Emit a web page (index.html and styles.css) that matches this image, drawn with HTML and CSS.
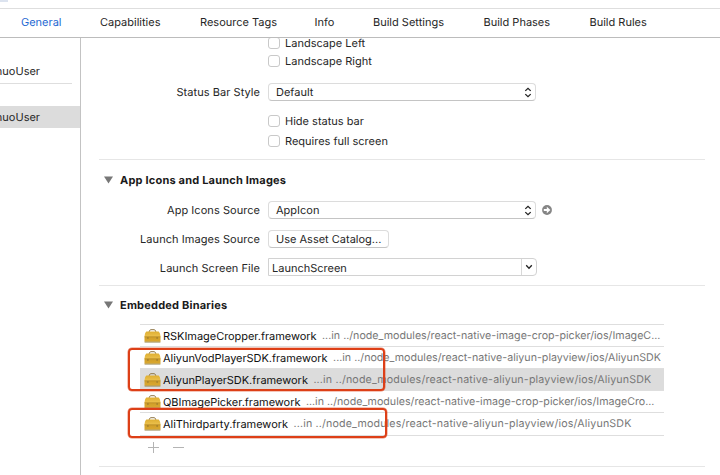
FILE: index.html
```html
<!DOCTYPE html>
<html lang="en">
<head>
<meta charset="utf-8">
<title>Project settings</title>
<link rel="stylesheet" href="styles.css">
</head>
<body>
<svg width="0" height="0" class="defs" aria-hidden="true">
  <defs>
    <linearGradient id="gold" x1="0" y1="0" x2="0" y2="1"><stop offset="0" stop-color="#dfaf32"/><stop offset=".45" stop-color="#ebc04c"/><stop offset=".55" stop-color="#d09e2a"/><stop offset="1" stop-color="#dba92f"/></linearGradient>
    <symbol id="case" viewBox="0 0 17 14">
      <path d="M5.3 3V2.2Q5.6 1 6.8 .7H10.2Q11.4 1 11.7 2.2V3" fill="none" stroke="#8d7444" stroke-width="1"/>
      <path d="M2.3 2.6H14.7Q16.2 3.8 16.5 7.2V12.8H.5V7.2Q.8 3.8 2.3 2.6Z" fill="url(#gold)"/>
      <path d="M.6 7.8H16.4" stroke="#ad8222" stroke-width=".6"/>
      <path d="M.6 13.1H16.4" stroke="#8d7638" stroke-width=".8"/>
      <path d="M3.9 8.2V9.7M13.1 8.2V9.7" stroke="#8a7030" stroke-width="1.1"/>
    </symbol>
    <symbol id="updown" viewBox="0 0 8 11"><path d="M1.3 3.9L4 1.3L6.7 3.9M1.3 7.1L4 9.7L6.7 7.1" fill="none" stroke="#222" stroke-width="1.3"/></symbol>
  </defs>
</svg>
<div class="window">
  <div class="toolbar"><i class="chip"></i></div>
  <nav class="tabs">
    <span class="tab on">General</span><span class="tab t2">Capabilities</span><span class="tab t3">Resource Tags</span><span class="tab t4">Info</span><span class="tab t5">Build Settings</span><span class="tab t6">Build Phases</span><span class="tab t7">Build Rules</span>
  </nav>
  <div class="body">
    <aside class="side">
      <div class="project"><span>nuoUser</span></div>
      <div class="target"><span>nuoUser</span></div>
    </aside>
    <main class="editor">
      <section class="deploy">
        <div class="row r-left"><span></span><label class="check"><i></i><span>Landscape Left</span></label></div>
        <div class="row r-right"><span></span><label class="check"><i></i><span>Landscape Right</span></label></div>
        <div class="row r-style"><span class="name">Status Bar Style</span><div class="select"><span>Default</span><svg width="8" height="11"><use href="#updown"/></svg></div></div>
        <div class="row r-hide"><span></span><label class="check"><i></i><span>Hide status bar</span></label></div>
        <div class="row r-full"><span></span><label class="check"><i></i><span>Requires full screen</span></label></div>
      </section>
      <section class="icons">
        <h2><svg width="9" height="8"><path d="M0 .5H9L4.5 7.5Z" fill="#777"/></svg><span>App Icons and Launch Images</span></h2>
        <div class="row r-icon"><span class="name">App Icons Source</span><div class="select"><span>AppIcon</span><svg width="8" height="11"><use href="#updown"/></svg></div>
          <svg class="go" width="10" height="10" viewBox="0 0 10 10"><circle cx="5" cy="5" r="4.9" fill="#858585"/><path d="M1.8 3.9H4.8V1.8L8.4 5L4.8 8.2V6.1H1.8Z" fill="#fff"/></svg></div>
        <div class="row r-launch"><span class="name">Launch Images Source</span><div class="button"><span>Use Asset Catalog...</span></div></div>
        <div class="row r-file"><span class="name">Launch Screen File</span><div class="combo"><span>LaunchScreen</span><b><svg width="8" height="6" viewBox="0 0 8 6"><path d="M1.2 1.3L4 4.2L6.8 1.3" fill="none" stroke="#222" stroke-width="1.3"/></svg></b></div></div>
      </section>
      <section class="binaries">
        <h2><svg width="9" height="8"><path d="M0 .5H9L4.5 7.5Z" fill="#777"/></svg><span>Embedded Binaries</span></h2>
        <div class="list">
          <div class="item"><svg width="17" height="14"><use href="#case"/></svg><span class="fw">RSKImageCropper.framework</span><span class="path">...in ../node_modules/react-native-image-crop-picker/ios/ImageC...</span></div>
          <div class="item"><svg width="17" height="14"><use href="#case"/></svg><span class="fw">AliyunVodPlayerSDK.framework</span><span class="path">...in ../node_modules/react-native-aliyun-playview/ios/AliyunSDK</span></div>
          <div class="item picked"><svg width="17" height="14"><use href="#case"/></svg><span class="fw">AliyunPlayerSDK.framework</span><span class="path loose">...in ../node_modules/react-native-aliyun-playview/ios/AliyunSDK</span></div>
          <div class="item"><svg width="17" height="14"><use href="#case"/></svg><span class="fw">QBImagePicker.framework</span><span class="path">...in ../node_modules/react-native-image-crop-picker/ios/ImageCro...</span></div>
          <div class="item last"><svg width="17" height="14"><use href="#case"/></svg><span class="fw">AliThirdparty.framework</span><span class="path loose">...in ../node_modules/react-native-aliyun-playview/ios/AliyunSDK</span></div>
          <div class="mark m1"></div>
          <div class="mark m2"></div>
        </div>
        <div class="actions"><svg width="37" height="12" viewBox="0 0 37 12"><path d="M0 6.5H11M5.5 1V12M25 6.5H36" stroke="#b4b4b4" fill="none"/></svg></div>
      </section>
    </main>
  </div>
</div>
</body>
</html>
```
FILE: styles.css
```css
* { box-sizing: border-box; }
body { margin: 0; background: #fff; color: #262626; font: 11px/16px Inter, "Liberation Sans", sans-serif; white-space: nowrap; text-rendering: geometricPrecision; }
.defs { position: absolute; }
.window { width: 720px; height: 475px; overflow: hidden; display: flex; flex-direction: column; }
.toolbar { height: 9px; border-bottom: 1px solid #dedede; }
.chip { display: block; width: 8px; height: 2px; background: #dce3ef; }
.tabs { height: 29px; border-bottom: 1px solid #bcbcbc; display: flex; align-items: center; padding: 0 0 2px 21px; }
.tab { width: 79px; }
.tab.on { color: #2468d2; }
.t2 { width: 100px; }
.t3 { width: 114.5px; }
.t4 { width: 58.5px; }
.t5 { width: 110.5px; }
.t6 { width: 106px; }
.body { flex: 1; min-height: 0; display: flex; }
.side { width: 81px; border-right: 1px solid #c3c3c3; padding-top: 24px; }
.project, .target { overflow: hidden; display: flex; justify-content: flex-end; align-items: center; }
.project { width: 72px; height: 22px; border-bottom: 1px solid #dedede; padding-right: 32px; padding-bottom: 3px; }
.target { margin-top: 22px; height: 22px; background: #dcdcdc; padding-right: 40px; }
.editor { flex: 1; padding: 0 15px 0 18px; min-width: 0; }
section { border-bottom: 1px solid #e6e6e6; }
.row { display: grid; grid-template-columns: 161px 268px auto; column-gap: 8px; align-items: center; }
.name { text-align: right; letter-spacing: .05px; }
.check { display: flex; align-items: center; gap: 5px; }
.check i { width: 12px; height: 12px; border: 1px solid #c9c9c9; border-radius: 3px; background: #fff; }
.deploy { height: 122px; overflow: hidden; }
.r-left { height: 18px; margin-top: -4px; }
.r-right { height: 18px; }
.r-style { height: 18px; margin-top: 13px; }
.r-hide { height: 20px; margin-top: 10px; }
.r-full { height: 20px; }
.select, .button { height: 18px; border: 1px solid #dcdcdc; border-bottom-color: #c4c4c4; border-radius: 4px; display: flex; align-items: center; justify-content: space-between; padding: 0 3px 0 7px; }
.icons { height: 126px; padding-top: 12px; }
h2 { margin: 0; height: 16px; font-size: 11px; line-height: 16px; font-weight: 700; letter-spacing: .2px; color: #1a1a1a; display: flex; align-items: center; gap: 7px; padding-left: 5px; }
.r-icon { height: 18px; margin-top: 13px; }
.go { margin-left: -2px; }
.r-launch { height: 18px; margin-top: 11px; }
.button { width: 121px; }
.r-file { height: 18px; margin-top: 10px; }
.r-file .name, .combo span { padding-top: 1px; }
.combo { height: 18px; width: 269px; border: 1px solid #d2d2d2; border-radius: 0 4px 4px 0; display: flex; justify-content: space-between; padding-left: 3px; line-height: 17px; }
.combo b { width: 15px; border-left: 1px solid #d8d8d8; display: flex; align-items: center; justify-content: center; }
.binaries { height: 181px; padding-top: 11px; }
.list { position: relative; margin: 11px 0 0 41px; width: 524px; border-top: 1px solid #dedede; }
.item { height: 22px; border-bottom: 1px solid #dedede; display: flex; align-items: center; padding-left: 3.5px; }
.item svg { margin-right: 2.5px; flex: none; }
.item.picked { background: #dcdcdc; }
.item.last { height: 23px; }
.fw { color: #111; letter-spacing: -.04px; }
.path { color: #777; margin-left: 5.5px; font-size: 10.66px; }
.path.loose { letter-spacing: .16px; }
.mark { position: absolute; border: 2px solid #dd3f17; border-radius: 4px; box-shadow: 0 0 0 .5px #dd3f1799; left: -12px; }
.m1 { top: 23px; width: 257px; height: 43px; }
.m2 { top: 83px; width: 259px; height: 30px; }
.actions { padding: 5px 0 0 49px; }
.actions svg { display: block; }
```
